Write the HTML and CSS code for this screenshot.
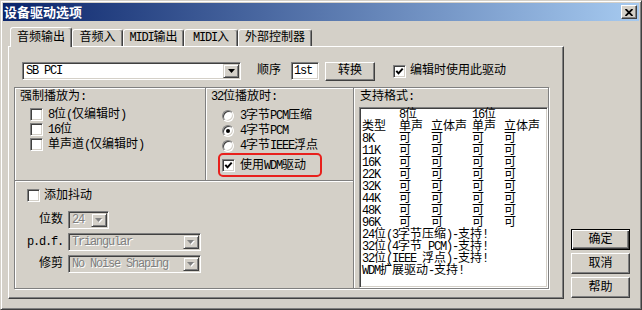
FILE: index.html
```html
<!DOCTYPE html>
<html>
<head>
<meta charset="utf-8">
<title>设备驱动选项</title>
<link rel="stylesheet" href="styles.css">
</head>
<body>
<div class="window">
  <div class="titlebar">
    <span class="title">设备驱动选项</span>
    <span class="close"><svg width="8" height="7" viewBox="0 0 8 7"><path d="M0.5 0L7.5 7M7.5 0L0.5 7" stroke="#000" stroke-width="1.8" fill="none"/></svg></span>
  </div>
  <div class="client">
    <div class="tabctl">
      <div class="tabs">
        <div class="tab sel w1">音频输出</div>
        <div class="tab w2">音频入</div>
        <div class="tab w3"><span class="l">MIDI</span>输出</div>
        <div class="tab w4"><span class="l">MIDI</span>入</div>
        <div class="tab w5">外部控制器</div>
      </div>
      <div class="panel">
        <div class="toprow">
          <div class="combo wide">
            <span class="val"><span class="l">SB PCI</span></span>
            <span class="dbtn"><svg width="7" height="4" viewBox="0 0 7 4"><path d="M0 0H7L3.5 4Z" fill="#000"/></svg></span>
          </div>
          <span class="order-lbl">顺序</span>
          <div class="field"><span class="l">1st</span></div>
          <div class="pbtn conv">转换</div>
          <span class="chk on top-chk"><svg width="9" height="9" viewBox="0 0 9 9"><path d="M1.3 3.8L3.5 6.3L7.7 1.7" stroke="#000" stroke-width="2" fill="none"/></svg></span>
          <span class="chk-lbl">编辑时使用此驱动</span>
        </div>
        <div class="groups">
          <div class="cell force">
            <div class="gtitle">强制播放为<span class="l">:</span></div>
            <div class="opts">
              <div class="opt"><span class="chk"></span><span class="otext"><span class="l">8</span>位<span class="l">(</span>仅编辑时<span class="l">)</span></span></div>
              <div class="opt"><span class="chk"></span><span class="otext"><span class="l">16</span>位</span></div>
              <div class="opt"><span class="chk"></span><span class="otext">单声道<span class="l">(</span>仅编辑时<span class="l">)</span></span></div>
            </div>
          </div>
          <div class="cell b32">
            <div class="gtitle"><span class="l">32</span>位播放时<span class="l">:</span></div>
            <div class="opts ropts">
              <div class="opt"><span class="radio"></span><span class="rtext"><span class="l">3</span>字节<span class="l">PCM</span>压缩</span></div>
              <div class="opt"><span class="radio on"></span><span class="rtext"><span class="l">4</span>字节<span class="l">PCM</span></span></div>
              <div class="opt"><span class="radio"></span><span class="rtext"><span class="l">4</span>字节<span class="l">IEEE</span>浮点</span></div>
              <div class="opt wdm"><span class="chk on"><svg width="9" height="9" viewBox="0 0 9 9"><path d="M1.3 3.8L3.5 6.3L7.7 1.7" stroke="#000" stroke-width="2" fill="none"/></svg></span><span class="otext">使用<span class="l">WDM</span>驱动</span></div>
            </div>
            <div class="highlight"></div>
          </div>
          <div class="cell fmt">
            <div class="gtitle">支持格式<span class="l">:</span></div>
            <div class="listbox">
              <div class="lgrid">
                <span></span><span><span class="l">8</span>位</span><span></span><span><span class="l">16</span>位</span><span></span>
                <span>类型</span><span>单声</span><span>立体声</span><span>单声</span><span>立体声</span>
                <span class="l">8K</span><span>可</span><span>可</span><span>可</span><span>可</span>
                <span class="l">11K</span><span>可</span><span>可</span><span>可</span><span>可</span>
                <span class="l">16K</span><span>可</span><span>可</span><span>可</span><span>可</span>
                <span class="l">22K</span><span>可</span><span>可</span><span>可</span><span>可</span>
                <span class="l">32K</span><span>可</span><span>可</span><span>可</span><span>可</span>
                <span class="l">44K</span><span>可</span><span>可</span><span>可</span><span>可</span>
                <span class="l">48K</span><span>可</span><span>可</span><span>可</span><span>可</span>
                <span class="l">96K</span><span>可</span><span>可</span><span>可</span><span>可</span>
                <span class="full"><span class="l">24</span>位<span class="l">(3</span>字节压缩<span class="l">)-</span>支持<span class="l">!</span></span>
                <span class="full"><span class="l">32</span>位<span class="l">(4</span>字节<span class="l"> PCM)-</span>支持<span class="l">!</span></span>
                <span class="full"><span class="l">32</span>位<span class="l">(IEEE </span>浮点<span class="l">)-</span>支持<span class="l">!</span></span>
                <span class="full"><span class="l">WDM</span>扩展驱动<span class="l">-</span>支持<span class="l">!</span></span>
              </div>
            </div>
          </div>
          <div class="cell dither">
            <div class="drow"><span class="chk"></span><span class="dlbl">添加抖动</span></div>
            <div class="form">
              <span class="flbl">位数</span>
              <div class="dcombo small"><span class="val"><span class="l">24</span></span><span class="dbtn"><svg width="8" height="5" viewBox="0 0 8 5"><path d="M1 1H8L4.5 5Z" fill="#fff"/><path d="M0 0H7L3.5 4Z" fill="#808080"/></svg></span></div>
              <span class="flbl"><span class="l">p.d.f.</span></span>
              <div class="dcombo big"><span class="val"><span class="l">Triangular</span></span><span class="dbtn"><svg width="8" height="5" viewBox="0 0 8 5"><path d="M1 1H8L4.5 5Z" fill="#fff"/><path d="M0 0H7L3.5 4Z" fill="#808080"/></svg></span></div>
              <span class="flbl">修剪</span>
              <div class="dcombo big"><span class="val"><span class="l">No Noise Shaping</span></span><span class="dbtn"><svg width="8" height="5" viewBox="0 0 8 5"><path d="M1 1H8L4.5 5Z" fill="#fff"/><path d="M0 0H7L3.5 4Z" fill="#808080"/></svg></span></div>
            </div>
          </div>
        </div>
      </div>
    </div>
    <div class="side">
      <div class="pbtn dlg def">确定</div>
      <div class="pbtn dlg">取消</div>
      <div class="pbtn dlg">帮助</div>
    </div>
  </div>
</div>
</body>
</html>
```
FILE: styles.css
```css
* { box-sizing: border-box; }
html, body { margin: 0; padding: 0; }
body {
  width: 642px;
  height: 310px;
  overflow: hidden;
  background: #D4D0C8;
  font-family: "Liberation Mono", "Noto Sans CJK SC", monospace;
  font-size: 12px;
  line-height: 12px;
  color: #000;
}
.l { letter-spacing: -1.2px; white-space: pre; }

.window {
  width: 642px;
  height: 310px;
  border: 1px solid;
  border-color: #D4D0C8 #404040 #404040 #D4D0C8;
  box-shadow: inset 1px 1px 0 #fff, inset -1px -1px 0 #808080;
  padding: 2px;
  background: #D4D0C8;
}
.titlebar {
  height: 18px;
  display: flex;
  align-items: center;
  justify-content: space-between;
  padding: 0 2px 0 1px;
  background: linear-gradient(to right, #0A246A, #A6CAF0);
}
.title {
  color: #fff;
  font-weight: bold;
  font-family: "Noto Sans CJK SC", sans-serif;
  font-size: 13px;
  line-height: 18px;
}
.close {
  width: 16px;
  height: 14px;
  background: #D4D0C8;
  border: 1px solid;
  border-color: #fff #404040 #404040 #fff;
  box-shadow: inset -1px -1px 0 #808080;
  display: flex;
  align-items: center;
  justify-content: center;
}

.client { display: flex; padding: 6px 0 0 5px; }
.tabctl { width: 556px; }
.tabs { display: flex; align-items: flex-end; height: 19px; padding-left: 2px; }
.tab {
  height: 17px;
  border: 1px solid;
  border-bottom: none;
  border-color: #fff #404040 transparent #fff;
  box-shadow: inset -1px 0 0 #808080;
  border-radius: 3px 3px 0 0;
  display: flex;
  align-items: center;
  justify-content: center;
  background: #D4D0C8;
}
.tab.sel { height: 20px; margin-bottom: -1px; position: relative; z-index: 1; }
.w1 { width: 62px; }
.w2 { width: 51px; }
.w3 { width: 61px; }
.w4 { width: 54px; }
.w5 { width: 74px; }

.panel {
  height: 253px;
  border: 1px solid;
  border-color: #fff #404040 #404040 #fff;
  box-shadow: inset -1px -1px 0 #808080;
  padding: 15px 13px 0 5px;
}
.toprow { display: flex; align-items: center; height: 18px; margin-left: 8px; }

.combo, .dcombo, .field, .listbox {
  border: 1px solid;
  border-color: #808080 #fff #fff #808080;
  box-shadow: inset 1px 1px 0 #404040, inset -1px -1px 0 #D4D0C8;
}
.combo, .dcombo {
  height: 18px;
  display: flex;
  align-items: center;
  padding: 1px;
  background: #fff;
}
.combo.wide { width: 219px; }
.val { flex: 1; padding-left: 2px; line-height: 12px; white-space: nowrap; overflow: hidden; }
.dbtn {
  width: 16px;
  height: 14px;
  background: #D4D0C8;
  border: 1px solid;
  border-color: #D4D0C8 #404040 #404040 #D4D0C8;
  box-shadow: inset 1px 1px 0 #fff, inset -1px -1px 0 #808080;
  display: flex;
  align-items: center;
  justify-content: center;
}
.order-lbl { margin-left: 16px; }
.field {
  width: 28px;
  height: 18px;
  margin-left: 10px;
  background: #fff;
  padding: 2px 0 0 2px;
}
.pbtn {
  border: 1px solid;
  border-color: #fff #404040 #404040 #fff;
  box-shadow: inset -1px -1px 0 #808080;
  display: flex;
  align-items: center;
  justify-content: center;
  background: #D4D0C8;
}
.conv { width: 50px; height: 19px; margin-left: 6px; }
.top-chk { margin-left: 18px; }
.chk-lbl { margin-left: 4px; }

.chk {
  width: 13px;
  height: 13px;
  flex: none;
  background: #fff;
  border: 1px solid;
  border-color: #808080 #fff #fff #808080;
  box-shadow: inset 1px 1px 0 #404040, inset -1px -1px 0 #D4D0C8;
  display: flex;
  align-items: center;
  justify-content: center;
}
.radio {
  width: 12px;
  height: 12px;
  flex: none;
  border-radius: 50%;
  background: #fff;
  border: 1px solid;
  border-color: #808080 #fff #fff #808080;
  box-shadow: inset 1px 1px 0 #404040, inset -1px -1px 0 #D4D0C8;
  display: flex;
  align-items: center;
  justify-content: center;
}
.radio.on::after {
  content: "";
  width: 4px;
  height: 4px;
  border-radius: 50%;
  background: #000;
}

.groups {
  margin-top: 7px;
  width: 535px;
  height: 202px;
  display: grid;
  grid-template-columns: 191px 148px 1fr;
  grid-template-rows: 93px 1fr;
  border-right: 1px solid #808080;
  border-bottom: 1px solid #808080;
  box-shadow: 1px 1px 0 #fff;
}
.cell {
  border-top: 1px solid #808080;
  border-left: 1px solid #808080;
  box-shadow: inset 1px 1px 0 #fff;
}
.gtitle { line-height: 12px; white-space: nowrap; }
.force { grid-column: 1; grid-row: 1; padding: 3px 0 0 5px; }
.opts { margin: 4px 0 0 10px; display: flex; flex-direction: column; }
.opt { display: flex; align-items: center; height: 15px; white-space: nowrap; }
.otext { margin-left: 5px; }
.rtext { margin-left: 6px; }

.b32 { grid-column: 2; grid-row: 1; padding: 3px 0 0 5px; position: relative; }
.ropts { margin: 5px 0 0 11px; }
.opt.wdm { margin-top: 5px; }
.highlight {
  position: absolute;
  left: 12px;
  top: 65px;
  width: 104px;
  height: 24px;
  border: 2px solid #E8201C;
  border-radius: 5px;
}

.fmt {
  grid-column: 3;
  grid-row: 1 / 3;
  padding: 3px 0 0 6px;
  display: flex;
  flex-direction: column;
}
.listbox {
  margin: 4px 0 0 -1px;
  width: 189px;
  flex: 1;
  background: #fff;
  padding: 1px 0 0 2px;
}
.lgrid {
  display: grid;
  grid-template-columns: 37px 32px 41px 32px 1fr;
  line-height: 12px;
  white-space: nowrap;
}
.lgrid .full { grid-column: 1 / -1; }

.dither { grid-column: 1 / 3; grid-row: 2; padding: 8px 0 0 5px; }
.drow { display: flex; align-items: center; height: 13px; margin-left: 7px; }
.dlbl { margin-left: 4px; }
.form {
  margin-top: 9px;
  display: grid;
  grid-template-columns: 43px auto;
  column-gap: 5px;
  row-gap: 4px;
  justify-items: start;
  align-items: center;
}
.flbl { justify-self: end; white-space: nowrap; }
.dcombo { background: #D4D0C8; color: #808080; text-shadow: 1px 1px 0 #fff; }
.dcombo.small { width: 41px; }
.dcombo.big { width: 133px; }

.side {
  margin-left: 7px;
  padding-top: 202px;
  display: flex;
  flex-direction: column;
  gap: 3px;
}
.dlg { width: 59px; height: 21px; }
.dlg.def {
  border-color: #000;
  box-shadow: inset 1px 1px 0 #fff, inset -1px -1px 0 #404040, inset -2px -2px 0 #808080;
}
```
